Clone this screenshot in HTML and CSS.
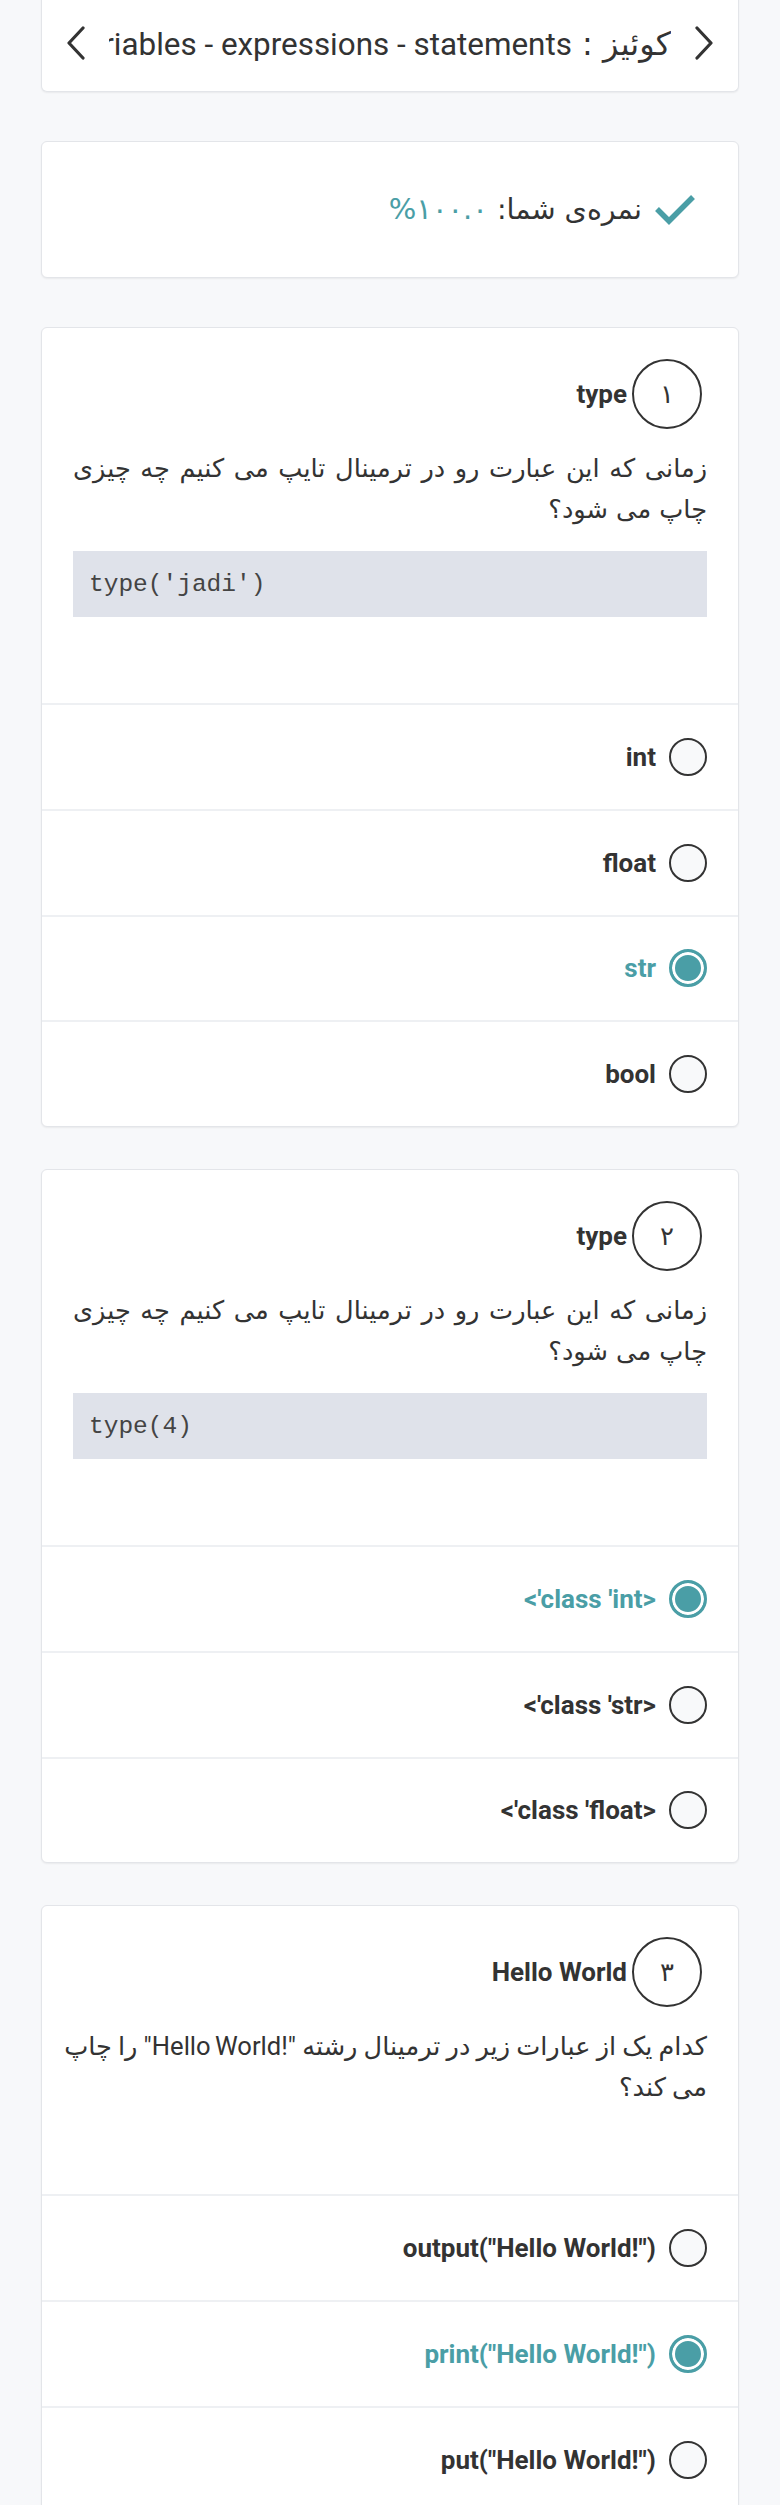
FILE: index.html
```html
<!DOCTYPE html>
<html lang="fa" dir="rtl">
<head>
<meta charset="utf-8">
<title>کوئیز</title>
<link rel="stylesheet" href="styles.css">
</head>
<body>
<div class="page">
  <div class="card topbar">
    <svg class="chev" width="22" height="34" viewBox="0 0 22 34"><polyline points="4,2 18,17 4,32" fill="none" stroke="#333" stroke-width="3.2" stroke-linecap="round" stroke-linejoin="round"/></svg>
    <div class="title fa">کوئیز : <span class="lat">Variables - expressions - statements</span></div>
    <svg class="chev" width="22" height="34" viewBox="0 0 22 34"><polyline points="18,2 4,17 18,32" fill="none" stroke="#333" stroke-width="3.2" stroke-linecap="round" stroke-linejoin="round"/></svg>
  </div>

  <div class="card score">
    <svg class="check" width="42" height="32" viewBox="0 0 42 32"><polyline points="3,15 15,27 39,3" fill="none" stroke="#4a9ea6" stroke-width="5.5"/></svg>
    <div class="score-text fa">نمره‌ی شما: <span class="teal ltr num-big">%۱۰۰.۰</span></div>
  </div>

  <div class="card qcard first">
    <div class="qbody">
      <div class="qhead"><div class="num fa">۱</div><div class="qtitle">type</div></div>
      <p class="qtext fa">زمانی که این عبارت رو در ترمینال تایپ می کنیم چه چیزی چاپ می شود؟</p>
      <div class="code">type('jadi')</div>
    </div>
    <div class="opt"><span class="radio"></span><span class="ltr">int</span></div>
    <div class="opt"><span class="radio"></span><span class="ltr">float</span></div>
    <div class="opt sel"><span class="radio"></span><span class="ltr">str</span></div>
    <div class="opt"><span class="radio"></span><span class="ltr">bool</span></div>
  </div>

  <div class="card qcard">
    <div class="qbody">
      <div class="qhead"><div class="num fa">۲</div><div class="qtitle">type</div></div>
      <p class="qtext fa">زمانی که این عبارت رو در ترمینال تایپ می کنیم چه چیزی چاپ می شود؟</p>
      <div class="code">type(4)</div>
    </div>
    <div class="opt sel"><span class="radio"></span><span class="ltr">&lt;'class 'int&gt;</span></div>
    <div class="opt"><span class="radio"></span><span class="ltr">&lt;'class 'str&gt;</span></div>
    <div class="opt"><span class="radio"></span><span class="ltr">&lt;'class 'float&gt;</span></div>
  </div>

  <div class="card qcard">
    <div class="qbody">
      <div class="qhead"><div class="num fa">۳</div><div class="qtitle ltr">Hello World</div></div>
      <p class="qtext fa tight"><span class="nw">کدام یک از عبارات زیر در ترمینال رشته <span class="ltr lat">"Hello World!"</span> را چاپ</span> می کند؟</p>
    </div>
    <div class="opt"><span class="radio"></span><span class="ltr">output("Hello World!")</span></div>
    <div class="opt sel"><span class="radio"></span><span class="ltr">print("Hello World!")</span></div>
    <div class="opt"><span class="radio"></span><span class="ltr">put("Hello World!")</span></div>
  </div>
</div>
</body>
</html>
```
FILE: styles.css
```css
* { box-sizing: border-box; }
html, body { margin: 0; }
body {
  background: #f7f8fa;
  font-family: Roboto, "DejaVu Sans", sans-serif;
  color: #333;
  direction: rtl;
}
.fa { font-family: "DejaVu Sans", Roboto, sans-serif; }
.lat { font-family: Roboto, "DejaVu Sans", sans-serif; }
.page {
  padding: 0 41px;
  height: 2505px;
  overflow: hidden;
}
.ltr { direction: ltr; unicode-bidi: isolate; }
.nw { white-space: nowrap; }
.teal { color: #4a9ea6; }
.card {
  background: #fff;
  border: 1px solid #e3e5e9;
  border-radius: 6px;
  box-shadow: 0 1px 2px rgba(0, 0, 0, 0.06);
}
.topbar {
  margin-top: -6px;
  height: 98px;
  display: flex;
  align-items: center;
  padding: 0 23px;
  border-top: 0;
  border-radius: 0 0 6px 6px;
}
.chev { flex: none; }
.title {
  flex: 1;
  margin: 0 22px;
  font-size: 32px;
  line-height: 40px;
  white-space: nowrap;
  overflow: hidden;
  padding-top: 4px;
}
.title .lat { font-size: 31.4px; }
.score {
  margin-top: 49px;
  height: 137px;
  display: flex;
  align-items: center;
  gap: 12px;
  padding-right: 42px;
}
.check { flex: none; }
.score-text { font-size: 28.5px; line-height: 40px; }
.num-big { font-size: 29px; }
.qcard { margin-top: 42px; overflow: hidden; }
.qcard.first { margin-top: 49px; }
.qbody { padding: 31px 31px 65px; }
.qhead {
  display: flex;
  align-items: center;
  gap: 5px;
  margin-bottom: 19px;
}
.num {
  width: 70px;
  height: 70px;
  margin-right: 5px;
  border: 2px solid #333;
  border-radius: 50%;
  display: flex;
  align-items: center;
  justify-content: center;
  font-size: 26px;
  flex: none;
}
.qtitle { font-weight: 700; font-size: 26px; }
.qtext {
  margin: 0 0 21px;
  height: 82px;
  font-size: 25.6px;
  line-height: 41px;
  text-align: justify;
}
.qtext.tight { word-spacing: -2px; }
.code {
  margin: 0 0 21px;
  height: 66px;
  background: #dfe2ea;
  display: flex;
  align-items: center;
  padding: 0 16px;
  direction: ltr;
  font-family: "Liberation Mono", monospace;
  font-size: 24.5px;
  color: #444;
}
.opt {
  height: 105.75px;
  display: flex;
  align-items: center;
  gap: 13px;
  padding: 0 31px;
  border-top: 2px solid #eef0f3;
  font-weight: 700;
  font-size: 26px;
}
.radio {
  width: 38px;
  height: 38px;
  flex: none;
  border: 2.5px solid #333;
  border-radius: 50%;
  background: #f8f9fa;
}
.opt.sel { color: #4a9ea6; }
.opt.sel .radio {
  border: 3px solid #4a9ea6;
  background: #4a9ea6;
  box-shadow: inset 0 0 0 3px #fff;
}
```
